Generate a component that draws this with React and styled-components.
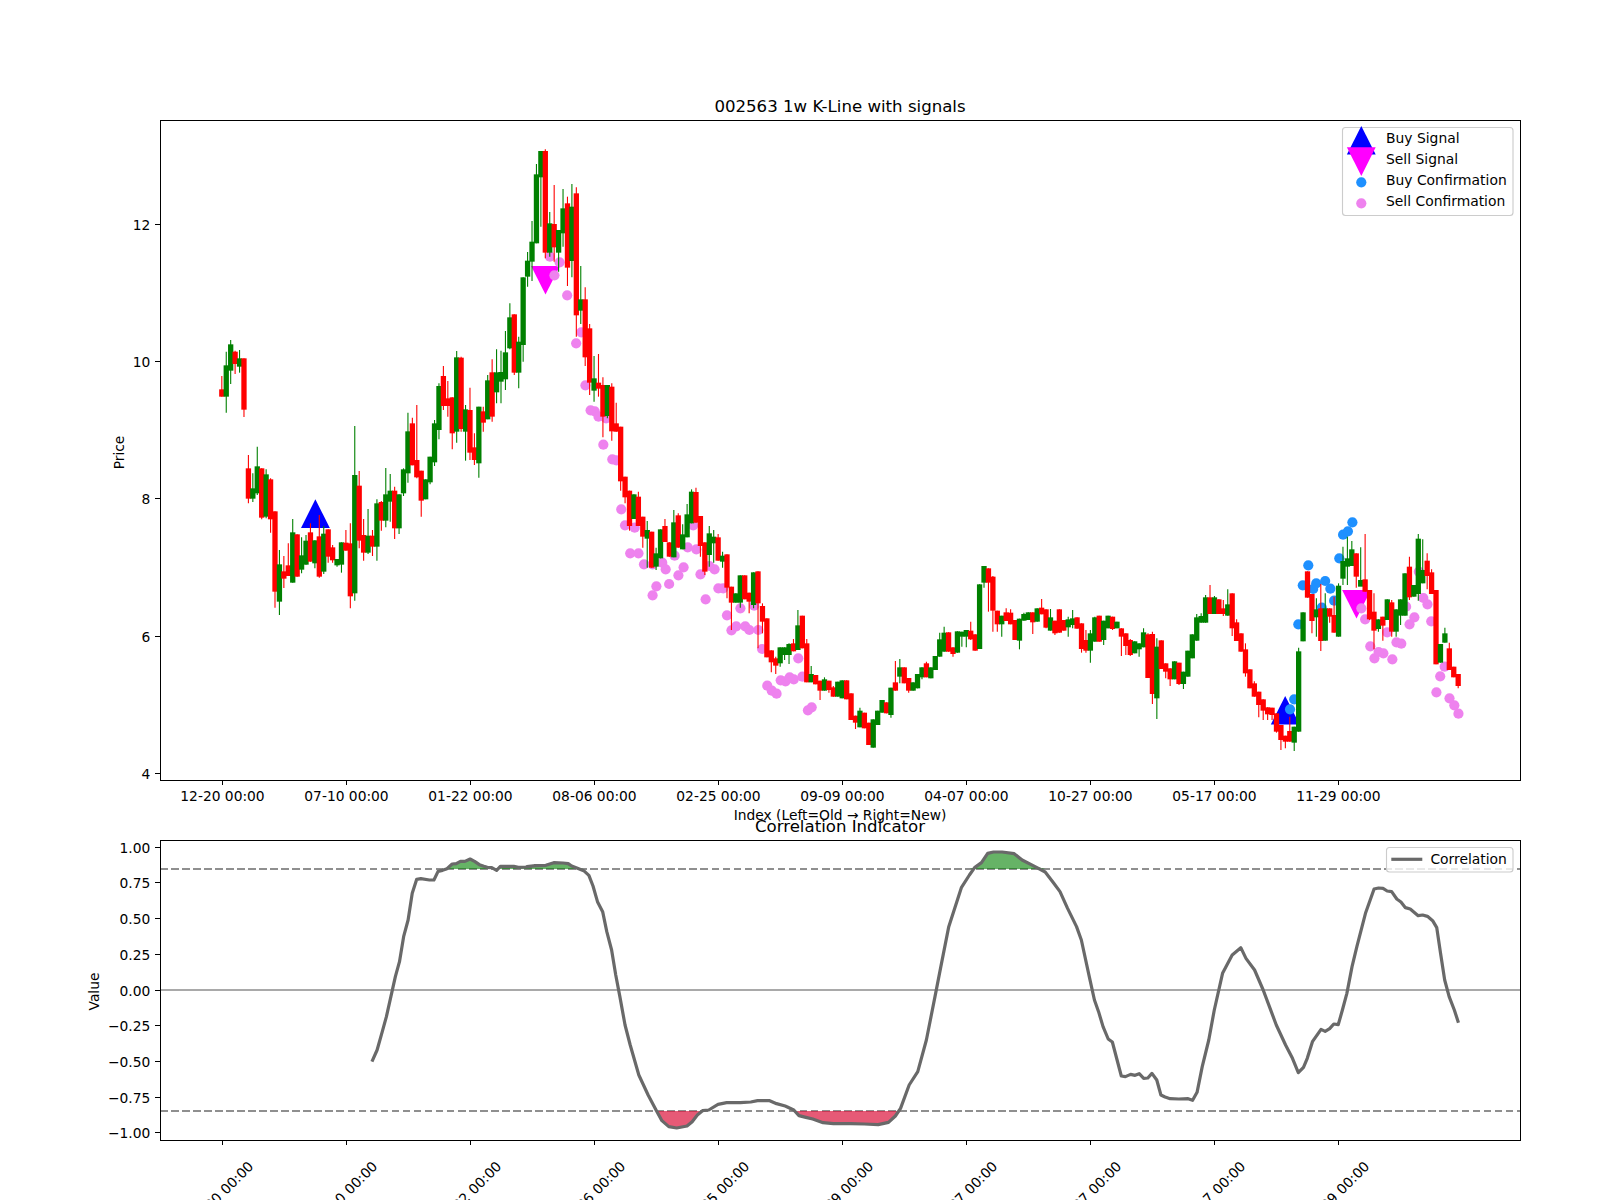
import styled, { createGlobalStyle } from "styled-components";

const GlobalStyle = createGlobalStyle`
  html, body {
    margin: 0;
    padding: 0;
    background: #ffffff;
  }
`;

const Figure = styled.div`
  width: 1600px;
  height: 1200px;
  display: flex;
  flex-direction: column;
  overflow: hidden;
  background: #ffffff;
  font-family: "DejaVu Sans", sans-serif;
`;

const Plot = styled.svg`
  display: block;
  flex-shrink: 0;
  overflow: visible;
`;

const Frame = styled.rect`
  fill: none;
  stroke: #000000;
  stroke-width: 1;
  shape-rendering: crispEdges;
`;

const Tick = styled.line`
  stroke: #000000;
  stroke-width: 1;
  shape-rendering: crispEdges;
`;

const Label = styled.text`
  font-family: "DejaVu Sans", sans-serif;
  font-size: ${(p) => p.$size || 13.82}px;
  fill: #000000;
`;

const Body = styled.rect`
  fill: ${(p) => (p.$up ? "#ff0000" : "#008000")};
`;

const Wick = styled.line`
  stroke: ${(p) => (p.$up ? "#ff0000" : "#008000")};
  stroke-width: 1.1;
`;

const Dot = styled.circle`
  fill: ${(p) => (p.$buy ? "#1e90ff" : "#ee82ee")};
`;

const Marker = styled.polygon`
  fill: ${(p) => (p.$buy ? "#0000ff" : "#ff00ff")};
`;

const LegendBox = styled.rect`
  fill: #ffffff;
  fill-opacity: 0.8;
  stroke: #cccccc;
  stroke-width: 1.11;
`;

const Level = styled.line`
  stroke: ${(p) => (p.$dashed ? "#8f8f8f" : "#a9a9a9")};
  stroke-width: 2;
  stroke-dasharray: ${(p) => (p.$dashed ? "7.7 3.33" : "none")};
  shape-rendering: crispEdges;
`;

const Area = styled.polygon`
  fill: ${(p) => (p.$high ? "#008000" : "#dc143c")};
  fill-opacity: ${(p) => (p.$high ? 0.6 : 0.7)};
`;

const CorrLine = styled.polyline`
  fill: none;
  stroke: #696969;
  stroke-width: 3.2;
  stroke-linejoin: round;
`;

const dates = [
  "12-20 00:00",
  "07-10 00:00",
  "01-22 00:00",
  "08-06 00:00",
  "02-25 00:00",
  "09-09 00:00",
  "04-07 00:00",
  "10-27 00:00",
  "05-17 00:00",
  "11-29 00:00",
];

const candleX = (i) => 221.82 + 4.4314 * i;
const tickXs = dates.map((_, i) => Math.round(222 + 124.05 * i) + 0.5);

// candles read off the chart, y values are 3x zoomed offsets from the given origin
const candleRows = [
  [80, `r 928 950 888 950,g 856 950 815 998,g 793 872 780 912,r 815 852 812 882,g 835 860 810 878,r 835 989 835 1011`],
  [440, `r 85 176 45 190,g 145 176 100 186,g 79 160 20 165,r 85 233 85 238,g 103 230 88 235,r 118 238 115 278,r 214 455 214 503,g 373 485 330 525,r 394 416 348 444,r 376 408 310 408,g 277 428 237 428,r 283 410 283 410,g 346 389 292 400,g 302 374 285 374,r 277 365 250 365,g 301 370 301 385,r 289 410 225 413,g 281 395 258 402,r 268 350 268 368,r 322 361 315 368,g 357 376 357 380,g 307 374 307 398,r 308 332 270 332,r 310 469 250 505,g 105 460 -42 482,r 137 302 93 325,r 285 338 237 362,g 287 338 207 342,r 287 320 270 348,g 190 320 178 362,r 186 242 183 272,g 163 242 84 262,g 152 185 102 245,r 152 265 140 297,g 163 265 163 282,g 88 160 85 168,g -26 100 -82 128,r -50 76 -67 76,r 60 112 -105 115,r 92 182 92 230,g 118 178 118 178,g 50 127 50 133,g -50 67 -60 78,g -162 -30 -170 -2,r -192 -102 -222 -90,r -125 -102 -177 -70,r -128 -20 -128 28,g -248 -25 -267 8,r -247 -33 -250 -25,g -92 -25 -105 62,r -90 38 -157 60,r 22 60 -20 75,g -100 70 -100 113,r -86 -52 -100 -25,g -179 -62 -195 -62,r -203 -70 -242 -55`],
  [80, `g 877 937 808 970,g 876 905 812 970,g 817 898 753 930,g 712 805 670 808,r 703 878 703 885,g 785 878 770 925,g 592 795 592 845,g 542 590 516 620,g 485 545 423 603,g 283 490 252 490,g 213 292 213 440,r 213 518 208 535,g 430 518 396 530,r 432 502 315 545,g 450 518 450 575,g 385 460 327 500,r 370 563 350 618,g 380 543 312 592,r 340 706 322 770,g 658 692 558 732,r 658 832 622 858,r 745 908 732 945,g 895 932 828 965,r 908 926 822 950,r 915 1010 892 1072,g 915 1008 915 1015,r 920 1054 910 1082,r 1030 1055 968 1055,r 1040 1204 1040 1232`],
  [440, `r 110 172 110 190,r 152 258 152 272,g 163 237 163 237,r 170 258 155 258,r 230 290 230 323,g 270 296 243 383,r 275 383 275 383,g 340 380 323 390,g 268 355 268 355,r 258 306 237 306,r 307 350 307 350,g 247 352 210 352,r 226 323 220 323,g 283 328 253 328,g 223 292 192 292,g 155 250 148 250,r 156 248 143 248,r 228 318 228 350,r 307 395 307 405,g 280 345 258 380,g 290 310 270 368,r 292 362 282 362,g 347 365 335 383,r 343 443 343 475,r 440 488 440 570,g 460 488 460 488,g 406 488 406 503,r 406 478 406 478,r 458 485 458 520,g 397 495 397 505,r 394 490 394 625,r 498 545 490 580,r 535 652 535 652,r 631 667 631 697,r 655 677 650 702,g 622 670 622 680,g 622 645 622 660,g 612 645 610 672,r 610 634 597 634,g 556 630 510 630,r 527 625 527 625,r 610 727 597 727,g 702 727 678 727,r 705 733 705 733,r 722 752 722 780,g 718 752 712 752,r 722 750 722 758,r 742 770 738 770,g 725 770 725 770,g 721 775 721 775,r 721 778 721 778,r 760 840 760 840,r 827 848 827 867,g 812 862 803 862,r 818 865 818 865,r 848 915 848 915,g 838 923 838 923,g 812 855 812 855,g 780 818 780 818,r 787 820 787 820,g 743 825 743 833,r 727 752 663 752,g 682 710 657 730,r 682 730 682 730,r 714 752 714 758,g 727 752 727 752,g 702 745 702 745,g 682 712 682 718,r 670 712 665 712,g 682 715 682 715,g 648 690 648 690,g 598 650 578 650,g 578 635 560 635,r 577 635 577 635,r 622 642 622 650,g 574 638 574 638,g 575 590 575 620,g 570 590 570 622,r 572 598 545 600,r 583 632 583 632,g 433 627 433 627,g 378 428 378 443,r 385 428 385 515,r 410 512 408 575,r 512 553 512 575,g 527 553 527 590,r 517 543 505 543,r 518 553 508 553,r 540 600 540 600,g 536 602 536 628,g 522 542 518 542,g 517 540 517 540,r 517 547 517 582,g 505 545 505 545,r 503 523 477 523,r 508 563 508 565,g 532 572 507 572,r 542 580 542 585,r 508 578 508 578,r 540 572 540 572,g 538 562 530 590,g 535 555 510 565,r 532 566 532 566,r 550 627 550 638,r 600 632 570 638,g 580 632 570 668,g 532 605 530 605,r 527 605 527 605,g 542 600 542 615,g 527 565 527 565,r 530 567 530 570,g 545 565 545 565,r 565 590 565 648,r 580 618 580 645,r 600 645 597 648,g 604 640 604 640,g 610 628 610 650,g 577 622 565 622,r 583 714 580 714,r 582 762 575 792,g 620 775 595 837,r 601 687 601 687,r 670 695 670 715,r 685 718 685 738,g 664 718 664 718,r 668 732 668 735,g 695 732 695 747,g 632 710 632 710,g 583 655 583 655,g 532 602 522 602,g 528 548 520 548,g 472 548 465 548,r 472 522 435 522,g 472 522 468 522,r 478 522 478 522,r 505 522 480 528,g 493 527 448 527,r 460 565 460 588,r 547 603 538 603,r 580 635 580 635,r 628 700 610 710,r 688 745 688 745,r 730 770 724 770,r 755 795 755 832,r 778 812 778 840,r 802 823 802 840,r 803 825 803 840,r 820 875 820 878,r 855 900 855 930,r 887 905 887 925,r 873 905 830 905,g 860 908 860 933,g 634 875 623 875,g 517 604 517 604,r 394 473 394 473,r 462 543 462 580,g 508 532 475 590,r 505 603 432 633,g 505 602 460 602,r 505 530 505 548,r 525 578 470 578,g 437 590 430 590,g 363 416 320 435,g 355 380 290 435,g 328 378 303 378,r 340 410 340 443,g 420 440 322 430,r 418 455 282 455,r 450 538 450 540,r 515 572 460 628,g 538 567 538 575,r 530 557 530 602,g 478 540 478 540,r 487 575 480 590,g 508 575 508 590,g 478 527 478 555,g 400 527 400 527,r 380 472 350 480,g 435 470 435 470,g 296 462 282 482,g 390 430 298 430,r 362 408 340 448,r 397 462 388 462,r 450 673 450 673,g 612 668 612 668,g 580 608 563 608,r 625 690 608 690,r 680 712 680 712,r 702 738 702 745`],
];

const candles = candleRows.flatMap(([origin, rows]) =>
  rows.split(",").map((row) => {
    const [c, a, b, w1, w2] = row.split(" ");
    const y = (v) => origin + Number(v) / 3;
    return { up: c === "r", top: y(a), bottom: y(b), high: y(w1), low: y(w2) };
  }),
);

// [zoom x, zoom y] pairs, same idea as above, with their crop origin
const fromZoom = (pts, ox, oy) =>
  pts.map(([x, y]) => [ox + x / 2.9037, oy + y / 3]);

const sellDots = [
  ...fromZoom(
    [[87,530],[115,547],[100,586],[137,646],[178,757],[163,790],[190,916],[205,991],[217,994],[228,1010],[250,1015]],
    520, 80,
  ),
  ...fromZoom(
    [[242,14],[268,58],[280,61],[294,208],[305,256],[333,263],[320,340],[344,340],[360,373],[385,373],[413,368],[423,388],[449,347],[487,322],[512,328],[503,256],[475,382],[460,406],[433,432],[396,439],[385,466],[524,403],[565,388],[550,378],[576,445],[590,445],[539,478],[601,526],[640,505],[680,497],[614,571],[628,559],[654,559],[666,570],[692,570],[703,627],[808,655],[718,737],[731,752],[745,761],[757,721],[771,724],[783,712],[795,718],[820,710],[836,811],[847,802]],
    520, 440,
  ),
  ...fromZoom(
    [[875,505],[886,538],[901,619],[913,655],[925,636],[939,640],[950,577],[965,658],[977,607],[991,611],[1005,500],[1015,553],[1029,532],[1042,395],[1055,474],[1067,493],[1078,544],[1117,680],[1104,709],[1093,757],[1131,775],[1145,796],[1157,821]],
    1060, 440,
  ),
];

const buyDots = fromZoom(
  [[680,778],[668,808],[692,553],[705,436],[721,376],[735,447],[744,430],[770,423],[785,446],[760,503],[796,482],[811,355],[822,284],[836,274],[849,247]],
  1060, 440,
);

const signals = [
  { buy: true, x: 315.4, y: 499.3 },
  { buy: false, x: 545.5, y: 266 },
  { buy: true, x: 1285.2, y: 696 },
  { buy: false, x: 1356.5, y: 590 },
];

const triangle = (s) =>
  s.buy
    ? `${s.x},${s.y} ${s.x + 14.4},${s.y + 28.6} ${s.x - 14.4},${s.y + 28.6}`
    : `${s.x - 14.4},${s.y} ${s.x + 14.4},${s.y} ${s.x},${s.y + 28.6}`;

const corrPoints = [
  ...fromZoom(
    [[1080,785],[1095,750],[1110,695],[1122,650],[1135,590],[1148,530],[1160,485],[1172,410],[1185,360],[1197,280],[1210,238],[1222,236],[1247,240],[1260,240],[1272,214],[1285,211],[1298,206],[1313,192],[1325,191],[1337,184],[1350,184],[1365,177],[1378,184],[1392,194],[1405,199],[1415,202],[1428,203],[1442,211],[1453,199],[1466,199],[1492,199],[1505,202],[1530,201],[1555,197]],
    0, 800,
  ),
  ...fromZoom(
    [[20,200],[48,197],[75,196],[98,188],[125,189],[140,191],[150,198],[165,204],[185,212],[200,226],[212,258],[225,305],[240,335],[252,395],[266,450],[278,525],[290,590],[305,675],[320,735],[345,825],[372,885],[395,930],[412,962],[432,980],[455,984],[485,978],[500,965],[515,945],[530,932],[548,930],[575,913],[600,908],[640,908],[670,906],[690,902],[725,902],[745,911],[770,918],[795,930],[810,947],[830,952],[850,957],[880,968],[910,971],[960,971],[1000,972],[1040,974],[1070,967],[1090,948],[1105,925],[1130,855],[1155,815],[1180,720],[1205,590],[1222,500],[1245,380],[1282,262],[1305,225],[1320,203],[1340,188],[1358,160],[1375,156],[1400,156],[1435,161],[1458,180],[1490,197],[1525,216],[1550,250]],
    520, 800,
  ),
  ...fromZoom(
    [[0,275],[22,325],[48,380],[62,420],[85,530],[100,600],[112,635],[125,680],[140,717],[152,726],[178,828],[190,830],[205,823],[218,826],[230,821],[243,835],[255,834],[267,820],[281,840],[293,885],[305,891],[320,896],[345,897],[372,896],[385,901],[398,877],[413,800],[432,720],[448,630],[472,520],[500,465],[525,443],[540,475],[565,510],[590,570],[610,625],[628,675],[655,735],[675,775],[692,818],[707,802],[718,775],[733,725],[758,688],[770,694],[783,686],[795,672],[808,674],[820,630],[833,580],[848,500],[862,440],[887,340],[912,267],[925,264],[938,265],[950,273],[963,275],[978,297],[990,306],[1003,323],[1017,327],[1040,347],[1053,345],[1067,349],[1082,362],[1094,383],[1105,460],[1117,540],[1130,590],[1145,630],[1157,668]],
    1060, 800,
  ),
];

const HIGH_Y = 869;
const LOW_Y = 1111;
const toPath = (pts) => pts.map(([x, y]) => `${x},${y}`).join(" ");
const highArea = toPath([
  ...corrPoints.map(([x, y]) => [x, Math.min(y, HIGH_Y)]),
  [corrPoints[corrPoints.length - 1][0], HIGH_Y],
  [corrPoints[0][0], HIGH_Y],
]);
const lowArea = toPath([
  ...corrPoints.map(([x, y]) => [x, Math.max(y, LOW_Y)]),
  [corrPoints[corrPoints.length - 1][0], LOW_Y],
  [corrPoints[0][0], LOW_Y],
]);

const priceTicks = [
  ["12", 224.5],
  ["10", 361.5],
  ["8", 498.5],
  ["6", 636.5],
  ["4", 773.5],
];

const corrTicks = ["1.00", "0.75", "0.50", "0.25", "0.00", "\u22120.25", "\u22120.50", "\u22120.75", "\u22121.00"];

const legendRows = ["Buy Signal", "Sell Signal", "Buy Confirmation", "Sell Confirmation"];

function YTicks({ ticks }) {
  return ticks.map(([text, y]) => (
    <g key={text}>
      <Tick x1={155.1} x2={160} y1={y} y2={y} />
      <Label x={150.3} y={y + 5} textAnchor="end">
        {text}
      </Label>
    </g>
  ));
}

function PricePanel() {
  return (
    <Plot width={1600} height={820} viewBox="0 0 1600 820">
      <Label x={840} y={111.7} textAnchor="middle" $size={16.6}>
        002563 1w K-Line with signals
      </Label>

      {signals.map((s) => (
        <Marker key={s.x} $buy={s.buy} points={triangle(s)} />
      ))}
      {sellDots.map(([x, y], i) => (
        <Dot key={i} cx={x} cy={y} r={5.1} />
      ))}
      {buyDots.map(([x, y], i) => (
        <Dot key={i} $buy cx={x} cy={y} r={5.1} />
      ))}

      {candles.map((c, i) => (
        <g key={i}>
          <Wick $up={c.up} x1={candleX(i)} x2={candleX(i)} y1={c.high} y2={c.low} />
          <Body $up={c.up} x={candleX(i) - 2.65} y={c.top} width={5.3} height={c.bottom - c.top} />
        </g>
      ))}

      <Frame x={160.5} y={120.5} width={1360} height={660} />
      <YTicks ticks={priceTicks} />
      {tickXs.map((x, i) => (
        <g key={x}>
          <Tick x1={x} x2={x} y1={780} y2={785} />
          <Label x={x} y={801} textAnchor="middle">
            {dates[i]}
          </Label>
        </g>
      ))}

      <Label x={840} y={820} textAnchor="middle">
        Index (Left=Old → Right=New)
      </Label>
      <Label transform="translate(123.6 452.5) rotate(-90)" textAnchor="middle">
        Price
      </Label>

      <LegendBox x={1342.5} y={127.5} width={170.5} height={88} rx={3} />
      <Marker $buy points={triangle({ buy: true, x: 1361.3, y: 126 })} />
      <Marker points={triangle({ buy: false, x: 1361.3, y: 147.3 })} />
      <Dot $buy cx={1361.3} cy={182.3} r={5.1} />
      <Dot cx={1361.3} cy={203.3} r={5.1} />
      {legendRows.map((text, i) => (
        <Label key={text} x={1386} y={143 + i * 21} $size={13.89}>
          {text}
        </Label>
      ))}
    </Plot>
  );
}

function CorrelationPanel() {
  return (
    <Plot width={1600} height={380} viewBox="0 820 1600 380">
      <Label x={840} y={831.7} textAnchor="middle" $size={16.6}>
        Correlation Indicator
      </Label>

      <Level x1={160} x2={1520} y1={990} y2={990} />
      <Level $dashed x1={160} x2={1520} y1={HIGH_Y} y2={HIGH_Y} />
      <Level $dashed x1={160} x2={1520} y1={LOW_Y} y2={LOW_Y} />
      <Area $high points={highArea} />
      <Area points={lowArea} />
      <CorrLine points={toPath(corrPoints)} />

      <Frame x={160.5} y={840.5} width={1360} height={300} />
      <YTicks ticks={corrTicks.map((t, i) => [t, Math.floor(847.2 + i * 35.7) + 0.5])} />
      {tickXs.map((x, i) => (
        <g key={x}>
          <Tick x1={x} x2={x} y1={1140} y2={1145} />
          <Label transform={`translate(${x + 2} 1197) rotate(-45)`} textAnchor="middle">
            {dates[i]}
          </Label>
        </g>
      ))}
      <Label transform="translate(98.5 991.5) rotate(-90)" textAnchor="middle">
        Value
      </Label>

      <LegendBox x={1386.5} y={847.5} width={126.5} height={24.5} rx={3} />
      <CorrLine points="1391.3,859.3 1422.3,859.3" />
      <Label x={1430.4} y={864.3} $size={13.89}>
        Correlation
      </Label>
    </Plot>
  );
}

export default function App() {
  return (
    <>
      <GlobalStyle />
      <Figure>
        <PricePanel />
        <CorrelationPanel />
      </Figure>
    </>
  );
}
